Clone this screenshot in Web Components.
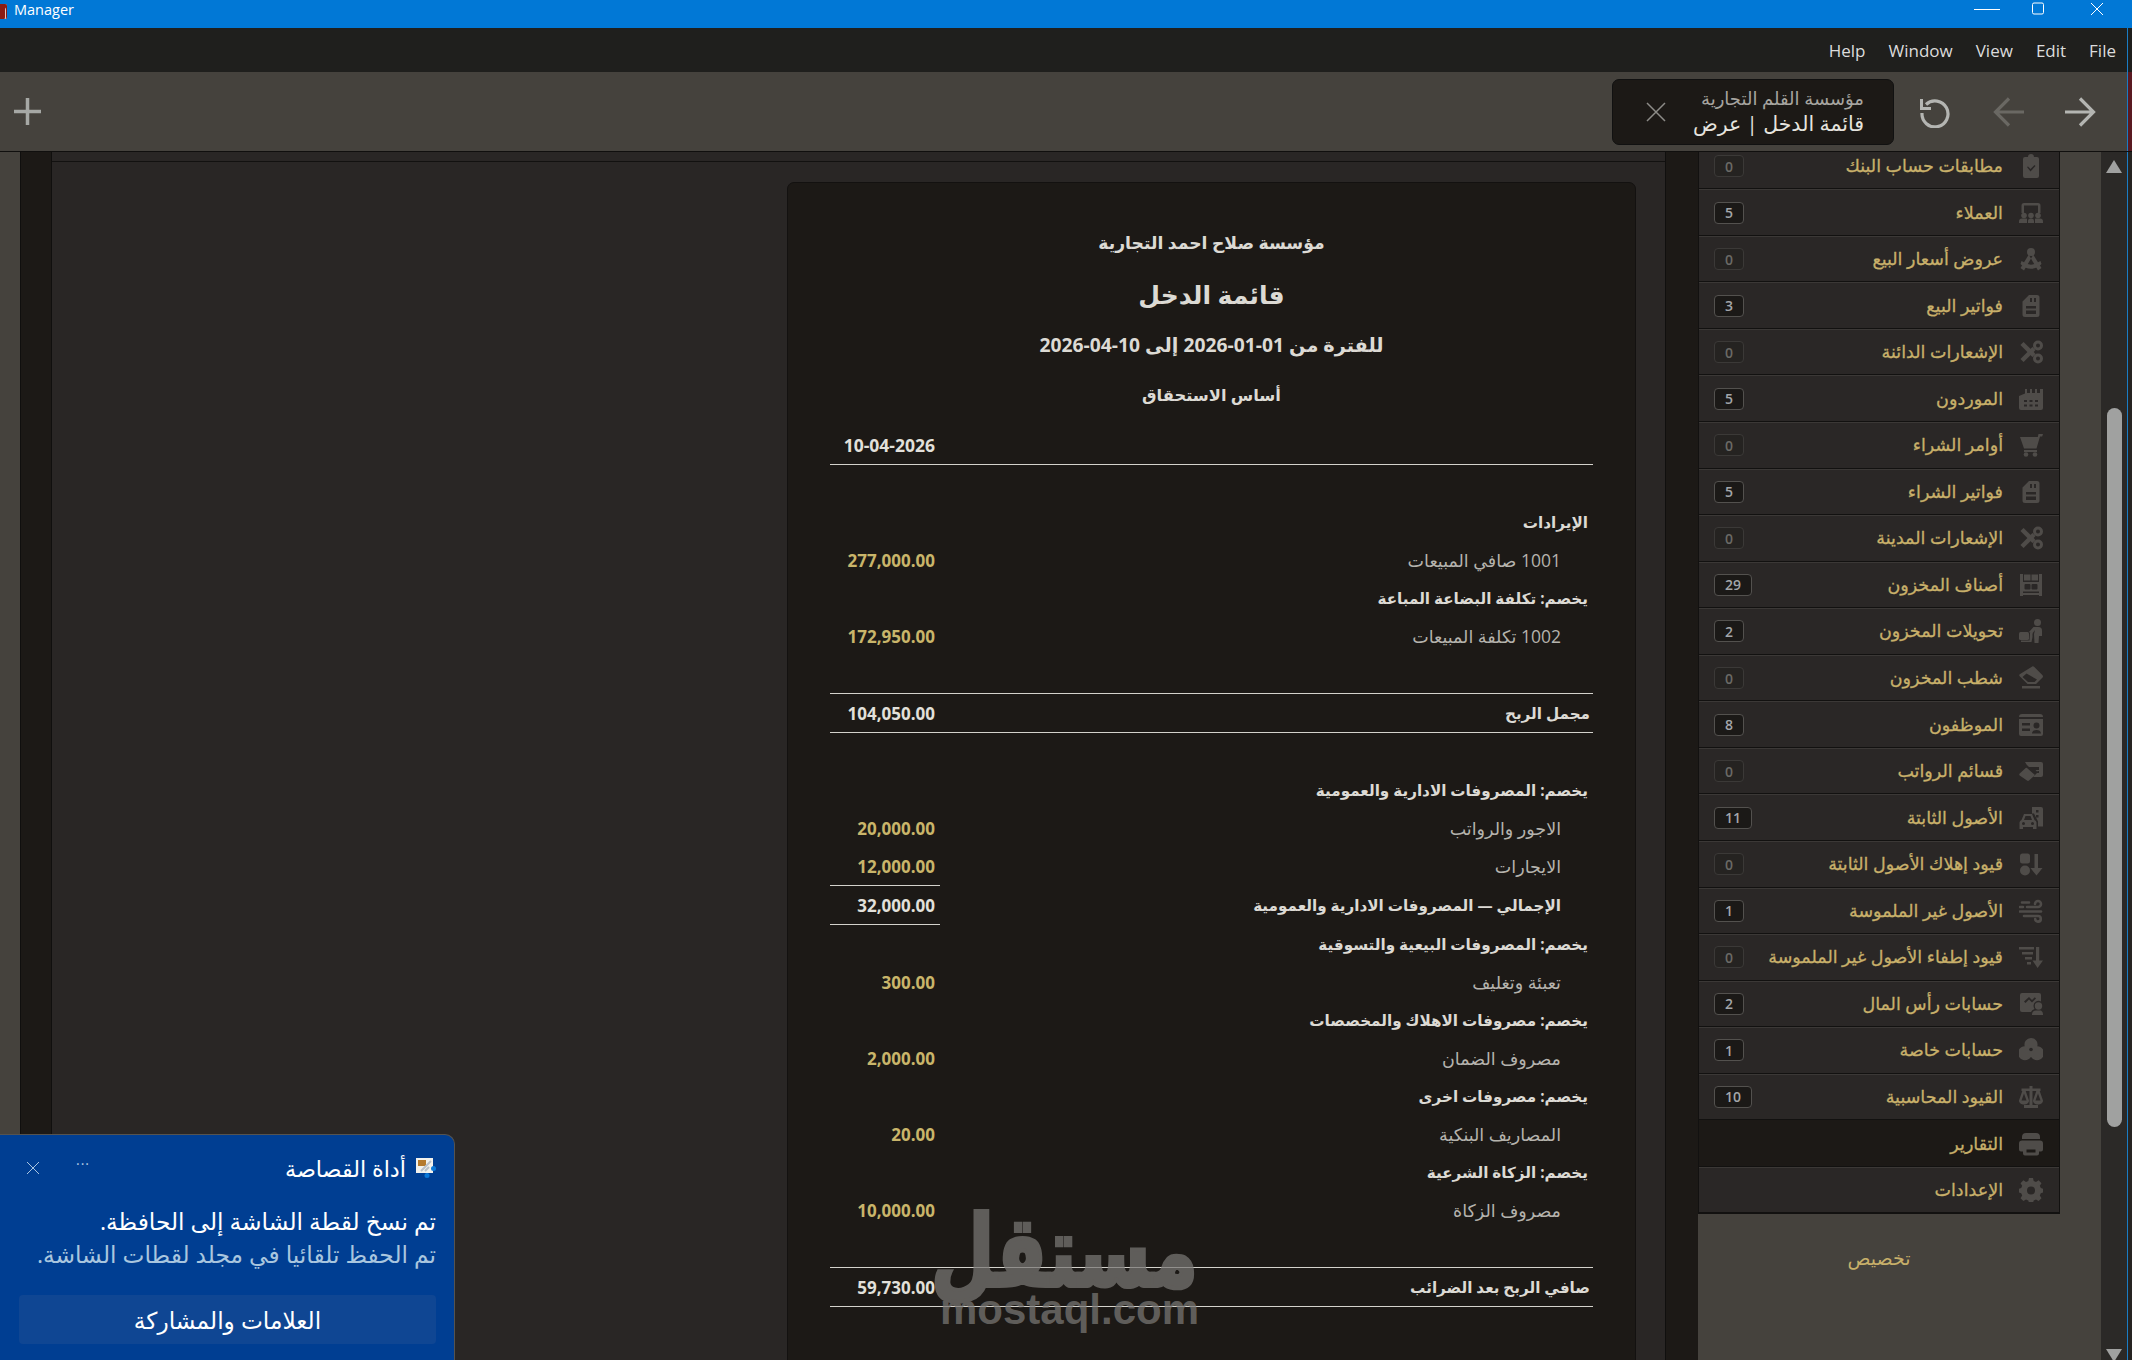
<!doctype html>
<html lang="ar"><head><meta charset="utf-8"><title>Manager</title>
<style>
html,body{margin:0;height:1360px;overflow:hidden;background:#1c1916}
body{font-family:"Open Sans","DejaVu Sans",sans-serif;color:#d8d6d0}
</style></head><body>
<app-shell></app-shell>
<script>
const AR='"Open Sans","DejaVu Sans",sans-serif';
const ICONS={
clip:'<path fill-rule="evenodd" d="M6 3h3a3 3 0 0 1 6 0h3a2 2 0 0 1 2 2v17a2 2 0 0 1-2 2H6a2 2 0 0 1-2-2V5a2 2 0 0 1 2-2zm2 10l3.500 4.500 5-5.500-1-1-4 4-2.500-2.500z"/>',
cust:'<path d="M5 2h14a2.500 2.500 0 0 1 2.500 2.500V12h-2.500V4.500H5V12H2.500V4.500A2.500 2.500 0 0 1 5 2z"/><circle cx="5" cy="14.500" r="2.800"/><circle cx="12" cy="14.500" r="2.800"/><circle cx="19" cy="14.500" r="2.800"/><path d="M0 22v-1.500a3 3 0 0 1 3-3h4a3 3 0 0 1 1 .2V22zM9 22v-2a2.500 2.500 0 0 1 2.500-2.500h1A2.500 2.500 0 0 1 15 20v2zM16 22v-4.300a3 3 0 0 1 1-.2h4a3 3 0 0 1 3 3V22z"/>',
comp:'<circle cx="12" cy="5" r="4"/><path d="M9.500 8L1.500 21l3.500 2.500L13.500 9zM14.500 8l8 13-3.500 2.500L10.500 9z"/><path d="M2.500 14l3 1.500a11 11 0 0 0 13 0l3-1.500 1 3a14 14 0 0 1-21 0z"/>',
inv:'<path fill-rule="evenodd" d="M10 1h8a2.500 2.500 0 0 1 2.500 2.500v17A2.500 2.500 0 0 1 18 23H6a2.500 2.500 0 0 1-2.500-2.500V7.500zM7 12v2.500h10V12zm0 4.500V20h10v-3.500zM11 4v4h2V4zM15 4v4h2V4z"/>',
scis:'<g fill="none" stroke="currentColor"><path d="M15 8.500L3 20.500" stroke-width="4.500"/><path d="M15 15.500L3 3.500" stroke-width="4.500"/><circle cx="19" cy="5.500" r="3.500" stroke-width="3"/><circle cx="19" cy="18.500" r="3.500" stroke-width="3"/></g>',
fact:'<path fill-rule="evenodd" d="M0 9l6-2.500V2h2v4h3V2h2v4h3V2h2v4h3V2h3v19a2 2 0 0 1-2 2H2a2 2 0 0 1-2-2zm5 4v2h3v-2zm5.500 0v2h3v-2zm5.500 0v2h3v-2zM5 17.500v2h3v-2zm5.500 0v2h3v-2zm5.500 0v2h3v-2z"/>',
cart:'<path d="M24 1l-.8 2.500H21L17.500 15.500H5L1 4h17.800l.7-3z"/><path d="M5 17h13v2H5z"/><circle cx="7" cy="21.500" r="2.300"/><circle cx="16" cy="21.500" r="2.300"/>',
shelf:'<path fill-rule="evenodd" d="M1 1h3v22H1zM20 1h3v22h-3zM5 1.500h6.500v6H5zM12.500 1.500H19v6h-6.500zM4 9h16v9.500H4zm2.500 2a1 1 0 0 0-1 1v3.500a1 1 0 0 0 1 1h4a1 1 0 0 0 1-1V12a1 1 0 0 0-1-1zm7 0a1 1 0 0 0-1 1v3.500a1 1 0 0 0 1 1h4a1 1 0 0 0 1-1V12a1 1 0 0 0-1-1zM4 20h16v2H4z"/>',
dolly:'<circle cx="18.500" cy="3.500" r="3.500"/><path d="M14.500 8h5a3.500 3.500 0 0 1 3.500 3.500V17h-3l-.5 7h-4l-.5-9 1-4-3 4-3-2z"/><rect x="0" y="13" width="10" height="8" rx="1.500"/><path d="M11 14h2.500v4l-1 5H2v-1.500h8.500z"/>',
eras:'<path fill-rule="evenodd" d="M12.500 1a2 2 0 0 1 2.800 0l8 8a2 2 0 0 1 0 2.800L17 18H8.500L.7 10.300a1.500 1.500 0 0 1 0-2zM7.500 7.500L3.500 11l5.500 5h6.500l2.500-2.500z"/><path d="M3 20h18v2.500H3z"/>',
idc:'<path fill-rule="evenodd" d="M3 1h18a3 3 0 0 1 3 3H0a3 3 0 0 1 3-3zM0 6h24v15a2 2 0 0 1-2 2H2a2 2 0 0 1-2-2zm3 4v2.500h8V10zm0 5.500V18h8v-2.500zm14.500-6a3 3 0 1 0 0 6 3 3 0 0 0 0-6zM13 20.500h9c0-2.500-2-3.500-4.500-3.500s-4.500 1-4.500 3.500z"/>',
pay:'<path d="M6 3h16a2 2 0 0 1 2 2v11a2 2 0 0 1-2 2H14l4-4h2v-2h-1l-1 .5-1.500-1.500H20V8H10l-2.500-2.500z"/><path d="M.7 14.500l6-5.500a1 1 0 0 1 1.300 0l8 7-6 5.500a1.500 1.500 0 0 1-2 0l-7.300-5a1.500 1.500 0 0 1 0-2z"/>',
carb:'<path fill-rule="evenodd" d="M13 1h9a2 2 0 0 1 2 2v17.500h-5v-5l-4-8h-2zm4 3v2.500h2.500V4zm0 5v2.500h2.500V9z"/><path fill-rule="evenodd" d="M5 8h8l2.500 6a3 3 0 0 1 2 2.500V23H14v-2H4v2H.5v-6.500a3 3 0 0 1 2-2.500zm1.500 2l-1.500 4h8l-1.500-4zM4.500 16a1.500 1.500 0 1 0 0 3 1.500 1.500 0 0 0 0-3zm9 0a1.500 1.500 0 1 0 0 3 1.500 1.500 0 0 0 0-3z"/>',
sortd:'<rect x="1" y="1.500" width="10" height="10" rx="2.500"/><circle cx="6" cy="18.500" r="5"/><path d="M15.500 2h3.500v14h4.500l-6 7.500-6-7.500h4z"/>',
wind:'<g fill="none" stroke="currentColor" stroke-width="2.600" stroke-linecap="round"><path d="M8 8h11a3 3 0 1 0-3-3"/><path d="M1 12.500h21"/><path d="M5 17h14a2.800 2.800 0 1 1-2.800 3"/><path d="M3 3.500h7M1 8h3"/></g>',
wide:'<path d="M0 2h15v2.500H0zM3 7h11v2.500H3zM6 12h7v2.500H6zM8 17h4v2.500H8zM17 2h3.200v13.500H24L18.600 23 13.500 15.500H17z"/>',
capi:'<path fill-rule="evenodd" d="M3 1h17a2 2 0 0 1 2 2v6.500a5 5 0 0 0-7.500 4.500c0 1 .5 2 1 3A6 6 0 0 0 12 20H3a2 2 0 0 1-2-2V3a2 2 0 0 1 2-2zm2 8.500l1.500 1.500L10 7.500l3 3 4-4-1.200-1.200L13 8l-3-3z"/><circle cx="19.500" cy="14" r="3.700"/><path d="M13 23v-1a4 4 0 0 1 4-3.500h5a4 4 0 0 1 2 3.500v1z"/>',
tri:'<path fill-rule="evenodd" d="M12 0a6.500 6.500 0 0 1 6.300 8.200A7 7 0 1 1 12 18.800 7 7 0 1 1 5.700 8.200 6.500 6.500 0 0 1 12 0z"/><circle cx="12" cy="11.500" r="1.800" fill="#2a2726"/>',
bal:'<path fill-rule="evenodd" d="M10.500 1h3v2.500h8V6h-.8l3.300 9.500c0 2.500-2.300 4-5 4s-5-1.500-5-4L17.300 6H13.500v14H19v3H5v-3h5.500V6H6.700L10 15.500c0 2.500-2.300 4-5 4s-5-1.500-5-4L3.300 6H2.500V3.500h8zM5 8.500l-2.500 7h5zM19 8.500l-2.500 7h5z"/>',
print:'<path fill-rule="evenodd" d="M7 1h10a4 4 0 0 1 4 4v2H3V5a4 4 0 0 1 4-4zM3 8.500h18a3 3 0 0 1 3 3v6a2 2 0 0 1-2 2h-2v2a2 2 0 0 1-2 2H6a2 2 0 0 1-2-2v-2H2a2 2 0 0 1-2-2v-6a3 3 0 0 1 3-3zm4.500 9v3h9v-3z"/>',
gear:'<path fill-rule="evenodd" d="M10 0h4l.7 3 2.300 1 2.600-1.700 2.900 2.900L20.800 7.800l1 2.300 2.200.7v3.800l-2.200.7-1 2.300 1.700 2.600-2.900 2.900-2.600-1.700-2.300 1-.7 2.500h-4l-.7-2.500-2.300-1-2.600 1.700-2.900-2.900 1.700-2.600-1-2.300L0 14.600v-3.800l2.200-.7 1-2.300L1.500 5.200l2.900-2.900L7 4l2.300-1zm2 8.500a4 4 0 1 0 0 8 4 4 0 0 0 0-8z"/>'
};
function make(name,html){customElements.define(name,class extends HTMLElement{
  constructor(){super();this.attachShadow({mode:'open'}).innerHTML=typeof html==='function'?'':html}
  connectedCallback(){if(typeof html==='function')this.shadowRoot.innerHTML=html(this)}
})}
make('title-bar',`<style>:host{display:flex;align-items:center;height:28px;background:#0178d6;color:#fff;font:14.500px/1 "Open Sans",sans-serif}
.app{width:7px;height:15px;margin:-6px 7px 0 0;background:#8c1c14;border-radius:0 2px 2px 0;box-shadow:inset -2px 4px 0 -1px #8c1c14,inset -3px 0 0 -1px #e8c9c0}
.t{flex:1;margin-top:-8px}.w{display:flex;height:28px;padding-right:28px}
.mx{margin-left:30px}.cl{margin-left:45px}svg{display:block;margin-top:1px}</style><span class="app"></span><span class="t">Manager</span>
<span class="w"><svg width="28" height="16" viewBox="0 0 28 16"><path d="M1 8.500h26" stroke="#fff" fill="none"/></svg>
<svg class="mx" width="14" height="16" viewBox="0 0 14 16"><rect x="1.500" y="2" width="11" height="11" rx="1.500" stroke="#fff" fill="none"/></svg>
<svg class="cl" width="14" height="16" viewBox="0 0 14 16"><path d="M1 2l12 12M13 2L1 14" stroke="#fff" fill="none"/></svg></span>`);
make('menu-bar',`<style>:host{display:flex;justify-content:flex-end;align-items:center;gap:23px;height:44px;padding-right:16px;background:#1f1f1d;color:#dcdcdc;font:17px "Open Sans",sans-serif;box-shadow:inset -4px 0 0 #1f1f1d,inset -5px 0 0 #1a7cc4}</style><span>Help</span><span>Window</span><span>View</span><span>Edit</span><span>File</span>`);
make('tab-chip',`<style>:host{display:flex;align-items:center;justify-content:space-between;width:282px;height:66px;box-sizing:border-box;padding:0 29px 0 33px;background:#1c1916;border:1px solid #111;border-radius:7px;font-family:${AR}}
.s{font-size:18px;color:#a7a5a0;line-height:24px;text-align:right;white-space:nowrap}.m{font-size:20.500px;color:#e6e4df;line-height:27px;text-align:right;white-space:nowrap}svg{display:block}</style>
<svg width="20" height="20" viewBox="0 0 20 20"><path d="M1 1l18 18M19 1L1 19" stroke="#8d8c88" stroke-width="1.500" fill="none"/></svg>
<div dir="rtl"><div class="s">مؤسسة القلم التجارية</div><div class="m">قائمة الدخل | عرض</div></div>`);
make('tool-bar',`<style>:host{display:flex;align-items:center;height:79px;background:#45423d;border-bottom:1px solid #100f0e;padding:0 36px 0 14px;box-shadow:inset -4px 0 0 #5a1a22,inset -5px 0 0 #1a7cc4}
.sp{flex:1}.nav{display:flex;align-items:center;margin-left:25px;gap:41.500px}svg{display:block}</style>
<svg width="27" height="27" viewBox="0 0 27 27"><path d="M13.500 0v27M0 13.500h27" stroke="#a6a8a5" stroke-width="3.500"/></svg><span class="sp"></span>
<tab-chip></tab-chip><div class="nav">
<svg width="32" height="32" viewBox="0 0 32 32" fill="none" stroke="#b4b5b2" stroke-width="3.200"><path d="M7 8.500A13 13 0 1 1 3 17"/><path d="M2.500 3v9.500H12" stroke-width="3"/></svg>
<svg width="31" height="30" viewBox="0 0 31 30" fill="none" stroke="#6a6863" stroke-width="3.200"><path d="M31 15H3M16 1.500L2.500 15 16 28.500"/></svg>
<svg width="31" height="30" viewBox="0 0 31 30" fill="none" stroke="#b4b5b2" stroke-width="3.200"><path d="M0 15h28M15 1.500L28.500 15 15 28.500"/></svg></div>`);
make('nav-row',el=>{const c=el.getAttribute('count'),z=c==='0',w=c&&c.length>1?38:30;return `<style>:host{display:flex;align-items:center;height:46.550px;box-sizing:border-box;padding:0 14px 0 15px;background:${el.hasAttribute('active')?'#1c1916':'#2a2726'};border-top:1px solid ${el.hasAttribute('active')?'#1c1916':'#3b3836'};border-bottom:1px solid #121110;font-family:${AR}}
.b{box-sizing:border-box;width:${w}px;height:22px;display:flex;align-items:center;justify-content:center;border-radius:4px;font:600 14px "Open Sans",sans-serif;background:${z?'#252321':'#1b1917'};border:1px solid ${z?'#3b3937':'#53514e'};color:${z?'#6b6a66':'#a3a6aa'}}
.l{flex:1;text-align:right;font-size:17.500px;color:#c8b06a;-webkit-text-stroke:.3px #c8b06a;margin-right:16px;padding-bottom:2px;white-space:nowrap}svg{display:block;width:24px;height:24px;fill:#4f4c49;color:#4f4c49;margin-right:2px;flex:none}</style>
${c?`<span class="b">${c}</span>`:''}<span class="l" dir="rtl">${el.getAttribute('label')}</span><svg viewBox="0 0 24 24">${ICONS[el.getAttribute('icon')]}</svg>`});
make('side-nav',el=>{const R=[['clip','مطابقات حساب البنك',0],['cust','العملاء',5],['comp','عروض أسعار البيع',0],['inv','فواتير البيع',3],['scis','الإشعارات الدائنة',0],['fact','الموردون',5],['cart','أوامر الشراء',0],['inv','فواتير الشراء',5],['scis','الإشعارات المدينة',0],['shelf','أصناف المخزون',29],['dolly','تحويلات المخزون',2],['eras','شطب المخزون',0],['idc','الموظفون',8],['pay','قسائم الرواتب',0],['carb','الأصول الثابتة',11],['sortd','قيود إهلاك الأصول الثابتة',0],['wind','الأصول غير الملموسة',1],['wide','قيود إطفاء الأصول غير الملموسة',0],['capi','حسابات رأس المال',2],['tri','حسابات خاصة',1],['bal','القيود المحاسبية',10]];
return `<style>:host{display:block;width:362px;box-sizing:border-box;background:#45423d;overflow:hidden;height:1208px;flex:none}
.list{margin-top:-9.250px;border:solid #121110;border-width:0 1px 1px}
.c{text-align:center;color:#c8b06a;font-family:${AR};font-size:19px;margin-top:31px}</style><div class="list">
${R.map(r=>`<nav-row icon="${r[0]}" label="${r[1]}" count="${r[2]}"></nav-row>`).join('')}
<nav-row active icon="print" label="التقارير"></nav-row><nav-row icon="gear" label="الإعدادات"></nav-row></div><div class="c" dir="rtl">تخصيص</div>`});
make('scroll-rail',`<style>:host{display:block;position:relative;flex:none;width:27px;height:1208px;background:#2b2927;border-right:1px solid #1a7cc4;box-sizing:border-box;overflow:hidden}
.t{width:15px;position:absolute;left:6px;top:256px;height:719px;background:#a0a1a0;border-radius:8px}
.u,.d{position:absolute;left:5px;width:0;height:0;border:solid transparent;border-width:0 8.500px}
.u{top:8px;border-bottom:13px solid #a0a1a0}.d{top:1197px;border-width:13px 8.500px 0;border-top:13px solid #a0a1a0}</style><div class="u"></div><div class="t"></div><div class="d"></div>`);
make('report-row',el=>{const k=el.getAttribute('kind')||'',a=el.getAttribute('amount')||'',l=el.getAttribute('label')||'';return `<style>:host{display:grid;grid-template-columns:110px 1fr;height:${k==='tot'||k==='sub'?40:38}px;box-sizing:border-box;align-items:stretch;${k==='tot'?'border-top:1px solid #d4d2cc;border-bottom:1px solid #d4d2cc;':''}font-family:${AR}}
.a{display:flex;align-items:center;justify-content:flex-end;padding-right:5px;font:700 17px "Open Sans",sans-serif;color:${k==='item'?'#c9b56a':'#e2e0da'};${k==='sub'?'border-top:1px solid #d4d2cc;border-bottom:1px solid #d4d2cc;':''}}
.l{display:flex;align-items:center;padding:0 ${k==='head'?5:k==='tot'?3:32}px 0 0;font-size:${k==='item'?17.5:15.200}px;font-weight:${k==='item'?400:700};color:${k==='item'?'#b5b3ad':'#dcdad4'};white-space:nowrap}</style>
<div class="a">${a}</div><div class="l" dir="rtl"><span dir="rtl">${l}</span></div>`});
make('report-card',`<style>:host{display:block;position:relative;width:849px;flex:none;height:1300px;box-sizing:border-box;padding:36px 42px 0;background:#1c1916;border:1px solid #131110;border-radius:7px;text-align:center;font-family:${AR};color:#dcdad4;font-weight:700}
h1,h2,h3,h4{margin:0;font-weight:700}
h2{font-size:17.200px;line-height:48px}h1{font-size:25px;line-height:54px}h3{font-size:19.300px;line-height:48px}h4{font-size:16.300px;line-height:52px;margin-bottom:5px}
.date{display:flex;height:39px;box-sizing:border-box;border-bottom:1px solid #d4d2cc;align-items:center;width:100%}.date span{width:105px;text-align:right;font:700 17.500px "Open Sans",sans-serif;color:#e2e0da}
.g{height:38px}
.wm{position:absolute;left:152px;top:1022px;width:258px;text-align:center;color:#7a7875;opacity:.72;pointer-events:none}
.wm b{display:block;font:700 73px/84px ${AR};-webkit-text-stroke:3px #7a7875;transform:scaleY(1.35);transform-origin:50% 45%}.wm i{display:block;font:700 42px/42px "Liberation Sans",sans-serif;font-style:normal}</style>
<div dir="rtl"><h2>مؤسسة صلاح احمد التجارية</h2><h1>قائمة الدخل</h1><h3>للفترة من <bdi dir="ltr">2026-01-01</bdi> إلى <bdi dir="ltr">2026-04-10</bdi></h3><h4>أساس الاستحقاق</h4></div>
<div class="date"><span>10-04-2026</span></div><div class="g"></div>
<report-row kind="head" label="الإيرادات"></report-row><report-row kind="item" amount="277,000.00" label="1001 صافي المبيعات"></report-row>
<report-row kind="head" label="يخصم: تكلفة البضاعة المباعة"></report-row><report-row kind="item" amount="172,950.00" label="1002 تكلفة المبيعات"></report-row>
<div class="g"></div><report-row kind="tot" amount="104,050.00" label="مجمل الربح"></report-row><div class="g"></div>
<report-row kind="head" label="يخصم: المصروفات الادارية والعمومية"></report-row><report-row kind="item" amount="20,000.00" label="الاجور والرواتب"></report-row><report-row kind="item" amount="12,000.00" label="الايجارات"></report-row>
<report-row kind="sub" amount="32,000.00" label="الإجمالي — المصروفات الادارية والعمومية"></report-row>
<report-row kind="head" label="يخصم: المصروفات البيعية والتسوقية"></report-row><report-row kind="item" amount="300.00" label="تعبئة وتغليف"></report-row>
<report-row kind="head" label="يخصم: مصروفات الاهلاك والمخصصات"></report-row><report-row kind="item" amount="2,000.00" label="مصروف الضمان"></report-row>
<report-row kind="head" label="يخصم: مصروفات اخرى"></report-row><report-row kind="item" amount="20.00" label="المصاريف البنكية"></report-row>
<report-row kind="head" label="يخصم: الزكاة الشرعية"></report-row><report-row kind="item" amount="10,000.00" label="مصروف الزكاة"></report-row>
<div class="g"></div><report-row kind="tot" amount="59,730.00" label="صافي الربح بعد الضرائب"></report-row>
<div class="wm"><b dir="rtl">مستقل</b><i>mostaql.com</i></div>`);
make('report-pane',`<style>:host{display:block;flex:1;min-width:0;height:1208px;overflow:hidden;background:#292625;border:solid #100f0e;border-width:0 1px;box-sizing:border-box}
.s{height:9px;border-bottom:1px solid #121110}.b{display:flex;justify-content:flex-end;padding:20px 29px 0 0}</style><div class="s"></div><div class="b"><report-card></report-card></div>`);
make('snip-toast',`<style>:host{position:absolute;left:0;bottom:0;width:455px;height:226px;box-sizing:border-box;background:#003e92;border:1px solid #55534f;border-bottom:0;border-left:0;border-radius:0 10px 0 0;color:#fff;font-family:${AR}}
.h{display:flex;align-items:center;height:28px;margin:19px 18px 0 26px}.x{width:14px;height:14px;display:block}.dots{margin-left:36px;font-size:14px;line-height:1;color:#b3cbe4;letter-spacing:1px;margin-top:-8px}
.t{flex:1;text-align:right;font-size:22.300px;margin-right:10px;white-space:nowrap}.ic{display:block}
.m{text-align:right;margin:23px 18px 0 0;font-size:23.300px;line-height:33px;white-space:nowrap}.m2{color:#a9c6df}
.btn{margin:24px 18px 0 19px;height:49px;border-radius:4px;background:#0f4693;display:flex;align-items:center;justify-content:center;font-size:23.300px}</style>
<div class="h"><svg class="x" viewBox="0 0 14 14"><path d="M1 1l12 12M13 1L1 13" stroke="#a8c4e0" fill="none"/></svg><span class="dots">···</span><span class="t" dir="rtl">أداة القصاصة</span>
<svg class="ic" width="20" height="20" viewBox="0 0 20 20"><rect x="0" y="0" width="17" height="15" fill="#f2f1ec"/><rect x="2" y="2" width="8" height="6" fill="#b57a2d"/><path d="M5 13L15 3M9 13l4-4" stroke="#b9c0c7" stroke-width="2"/><circle cx="17.500" cy="10.500" r="2.500" fill="#0a78d8"/><circle cx="11" cy="17.500" r="2.500" fill="#0a78d8"/></svg></div>
<div class="m" dir="rtl"><div>تم نسخ لقطة الشاشة إلى الحافظة.</div><div class="m2">تم الحفظ تلقائيا في مجلد لقطات الشاشة.</div></div>
<div class="btn" dir="rtl">العلامات والمشاركة</div>`);
make('app-shell',`<style>:host{display:block;position:relative;width:2132px;height:1360px;overflow:hidden;background:#45423d}
.main{display:flex;height:1208px}
.g1{width:20px;background:#45423d;flex:none}.d1{width:30px;flex:none;background:#1c1916;border-left:1px solid #100f0e}
.d2{width:32px;flex:none;background:#1c1916}.g2{width:41px;flex:none;background:#45423d}.e{width:4px;flex:none;background:#262422}</style>
<title-bar></title-bar><menu-bar></menu-bar><tool-bar></tool-bar>
<div class="main"><div class="g1"></div><div class="d1"></div><report-pane></report-pane><div class="d2"></div><side-nav></side-nav><div class="g2"></div><scroll-rail></scroll-rail><div class="e"></div></div>
<snip-toast></snip-toast>`);
</script></body></html>
